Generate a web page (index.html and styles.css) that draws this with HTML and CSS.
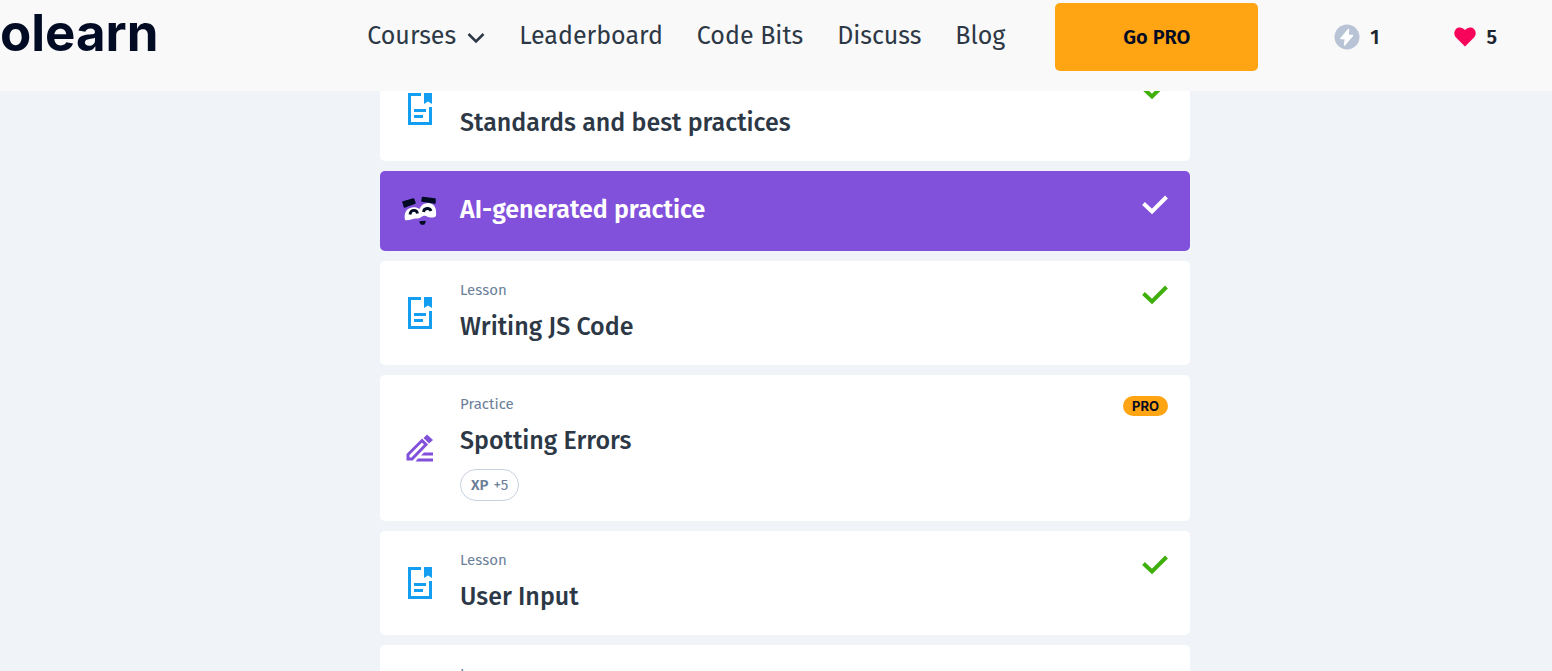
FILE: index.html
```
<!DOCTYPE html>
<html lang="en">
<head>
<meta charset="utf-8">
<meta name="viewport" content="width=device-width, initial-scale=1">
<title>Course</title>
<link rel="stylesheet" href="styles.css">
</head>
<body>
<svg class="sprite" aria-hidden="true">
  <symbol id="lesson" viewBox="0 0 24 32">
    <path fill="currentColor" d="M0 0H13V3H3V29H21V14H24V32H0ZM16 0H24V11L20 8.500L16 11ZM6 16H18V19H6ZM6 22H15V25H6Z"/>
  </symbol>
  <symbol id="check" viewBox="0 0 26 20">
    <path fill="none" stroke="currentColor" stroke-width="4" d="M1.500 8.500L10 16.500L24.500 2"/>
  </symbol>
</svg>
<header class="header">
  <a class="logo" href="#">olearn</a>
  <nav class="nav">
    <button class="nav-link nav-menu" type="button">Courses
      <svg class="chevron" viewBox="0 0 18 12" aria-hidden="true"><path fill="none" stroke="currentColor" stroke-width="2.500" d="M1.500 2L9 9.500L16.500 2"/></svg>
    </button>
    <a class="nav-link" href="#">Leaderboard</a>
    <a class="nav-link" href="#">Code Bits</a>
    <a class="nav-link" href="#">Discuss</a>
    <a class="nav-link" href="#">Blog</a>
  </nav>
  <button class="go-pro" type="button">Go PRO</button>
  <div class="stats">
    <span class="stat">
      <svg class="bolt" viewBox="0 0 26 26" aria-hidden="true"><circle cx="13" cy="13" r="12.500" fill="#b8c4d6"/><path fill="#fff" stroke="#fff" stroke-width="1.500" stroke-linejoin="round" d="M14.500 5.500L7 14.500H11.500L10.500 21L18.500 11.500H14Z"/></svg>
      1
    </span>
    <span class="stat">
      <svg class="heart" viewBox="0 0 22 20" aria-hidden="true"><path fill="#f7045b" d="M11 19.500L2 10.500C-.5 7.800 0 4 2 2C4.500-.3 8.500.2 11 3C13.500.2 17.500-.3 20 2C22 4 22.500 7.800 20 10.500Z"/></svg>
      5
    </span>
  </div>
</header>
<main class="main">
  <div class="list">
    <article class="card card-scrolled">
      <div class="icon"><svg class="lesson"><use href="#lesson"/></svg></div>
      <div class="body"><h2 class="title">Standards and best practices</h2></div>
      <svg class="check"><use href="#check"/></svg>
    </article>
    <article class="card card-ai">
      <div class="icon">
        <svg class="face" viewBox="0 0 36 30" aria-hidden="true">
          <path fill="#fff" d="M3 24C1.500 17 5 12 10 11.500C13 11 15 11.500 17.500 13C19 9 22 7 26 7C32 7 35 12 34 20C32 22 28 22 24 20C20 19 19 23 15 22.500C11 22 7 25 3 24Z"/>
          <g fill="none" stroke="#020b24" stroke-width="2.800"><path d="M8 18.500C8.500 13.500 14.500 13 15.500 17.500M21.500 16C22 11.500 28 11.500 29 15"/></g>
          <g fill="#020b24" stroke="#020b24" stroke-linejoin="round" stroke-width="1.500"><path d="M1 6L11.500 3L13 7L2.500 11ZM20.500 1.500L33 3V7L20 5Z"/><path d="M18 26L23 25.500L22 28H19.500Z"/></g>
        </svg>
      </div>
      <div class="body"><h2 class="title">AI-generated practice</h2></div>
      <svg class="check"><use href="#check"/></svg>
    </article>
    <article class="card">
      <div class="icon"><svg class="lesson"><use href="#lesson"/></svg></div>
      <div class="body"><p class="kind">Lesson</p><h2 class="title">Writing JS Code</h2></div>
      <svg class="check"><use href="#check"/></svg>
    </article>
    <article class="card">
      <div class="icon">
        <svg class="pencil" viewBox="0 0 28 28" aria-hidden="true"><path fill="none" stroke="currentColor" stroke-width="3" d="M2 25V20.500L16 6.500L20 10.500L6 25Z"/><path fill="currentColor" d="M17.500 4L21 .5L27 6L23 9.500ZM18 18.500H27V21.500H15ZM12 24.500H27V27.500H9.500Z"/></svg>
      </div>
      <div class="body">
        <p class="kind">Practice</p><h2 class="title">Spotting Errors</h2>
        <span class="xp"><strong>XP</strong> +5</span>
      </div>
      <span class="pro">PRO</span>
    </article>
    <article class="card">
      <div class="icon"><svg class="lesson"><use href="#lesson"/></svg></div>
      <div class="body"><p class="kind">Lesson</p><h2 class="title">User Input</h2></div>
      <svg class="check"><use href="#check"/></svg>
    </article>
    <article class="card card-next">
      <div class="icon"></div>
      <div class="body"><p class="kind">Lesson</p></div>
    </article>
  </div>
</main>
</body>
</html>
```
FILE: styles.css
```
* { box-sizing: border-box; }
body {
  margin: 0;
  height: 100vh;
  overflow: hidden;
  display: flex;
  flex-direction: column;
  background: #f0f4f8;
  color: #2d3846;
  font-family: "Fira Sans", "Noto Sans", sans-serif;
}
button { border: 0; font: inherit; color: inherit; cursor: pointer; }
.sprite { display: none; }

.header {
  flex: none;
  display: flex;
  align-items: center;
  padding: 3px 55px 20px 0;
  background: #f9f9f9;
  z-index: 1;
}
.logo {
  flex: 1;
  align-self: flex-start;
  color: #020b24;
  font: 700 51px/60px Inter, sans-serif;
  text-decoration: none;
}
.nav { display: flex; gap: 34px; margin: 0 50px 2px 0; }
.nav-link {
  padding: 0;
  background: none;
  color: inherit;
  font-size: 25px;
  line-height: 36px;
  text-decoration: none;
  white-space: nowrap;
}
.nav-menu { display: flex; align-items: center; gap: 11px; }
.chevron { width: 18px; height: 12px; margin-top: 4px; }
.go-pro {
  width: 203px;
  height: 68px;
  margin-right: 76px;
  border-radius: 5px;
  background: #ffa412;
  color: #020b24;
  font-size: 20px;
  font-weight: 600;
}
.stats { display: flex; gap: 75px; }
.stat { display: flex; align-items: center; gap: 10px; font-size: 20px; font-weight: 600; color: #1c2530; }
.bolt { width: 26px; height: 26px; }
.heart { width: 22px; height: 20px; }

.main { flex: 1; min-height: 0; overflow: hidden; padding-left: 18px; }
.list {
  display: flex;
  flex-direction: column;
  gap: 10px;
  width: 100%;
  max-width: 810px;
  margin: 0 auto;
}
.card {
  flex: none;
  display: flex;
  padding: 19px 22px 19px 0;
  border-radius: 5px;
  background: #fff;
}
.icon { flex: none; width: 80px; display: grid; place-items: center; }
.body { flex: 1; }
.lesson { width: 24px; height: 32px; color: #149ef2; }
.pencil { width: 28px; height: 28px; color: #8251db; }
.face { width: 36px; height: 30px; }
.kind { margin: 0 0 9px; color: #6b7f99; font-size: 15px; line-height: 20px; }
.title { margin: 0; font-size: 25px; line-height: 37px; font-weight: 500; }
.check { width: 26px; height: 20px; margin-top: 5px; color: #3faf0c; }
.card-scrolled { height: 105px; margin-top: -35px; }
.card-scrolled .body { align-self: flex-end; }
.card-ai { padding: 21px 22px 22px 0; background: #8251db; color: #fff; }
.card-ai .title { font-weight: 600; }
.card-ai .check { margin-top: 3px; color: #fff; }
.card-next { height: 104px; }
.xp {
  display: inline-flex;
  align-items: center;
  gap: 5px;
  height: 32px;
  margin: 9px 0 1px;
  padding: 0 10px;
  border: 1px solid #c8d2df;
  border-radius: 16px;
  color: #6b7f99;
  font-size: 15px;
  vertical-align: top;
}
.xp strong { font-weight: 600; }
.pro {
  height: 20px;
  margin-top: 2px;
  padding: 0 9px;
  border-radius: 10px;
  background: #ffa412;
  color: #020b24;
  font: 700 13px/20px Inter, sans-serif;
}
```
